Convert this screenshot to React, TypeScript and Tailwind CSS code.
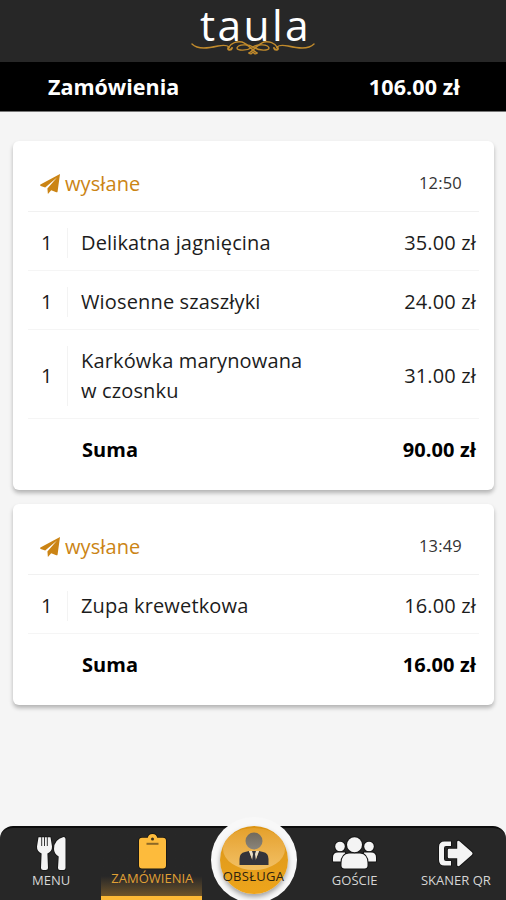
import type { ReactNode } from "react";

type OrderItem = { qty: number; name: string; price: string };
type Order = { time: string; items: OrderItem[]; total: string };

const ORDERS: Order[] = [
  {
    time: "12:50",
    items: [
      { qty: 1, name: "Delikatna jagnięcina", price: "35.00 zł" },
      { qty: 1, name: "Wiosenne szaszłyki", price: "24.00 zł" },
      { qty: 1, name: "Karkówka marynowana w czosnku", price: "31.00 zł" },
    ],
    total: "90.00 zł",
  },
  {
    time: "13:49",
    items: [{ qty: 1, name: "Zupa krewetkowa", price: "16.00 zł" }],
    total: "16.00 zł",
  },
];

function Flourish() {
  return (
    <svg
      width="124"
      height="16"
      viewBox="0 0 124 16"
      fill="none"
      stroke="#c08a2c"
      strokeWidth="1.4"
      strokeLinecap="round"
    >
      {/* left half, mirrored below */}
      <path d="M1 4C7 10 18 8 27 6C32 5 36 5 38 7C40 3 46 1 51 2C57 4 61 10 66 13" />
      <path d="M38 7C35 10 40 11 41 8" strokeWidth="2" />
      <path d="M62 7C58 4 47 4 46 8C46 11 56 11 62 7" />
      <path d="M123 4C117 10 106 8 97 6C92 5 88 5 86 7C84 3 78 1 73 2C67 4 63 10 58 13" />
      <path d="M86 7C89 10 84 11 83 8" strokeWidth="2" />
      <path d="M62 7C66 4 77 4 78 8C78 11 68 11 62 7" />
      <path d="M58 13C60 15 61 13 62 12C63 13 64 15 66 13" />
    </svg>
  );
}

function PlaneIcon() {
  return (
    <svg width="20" height="20" viewBox="0 0 20 20" fill="currentColor">
      <path d="M20 0L0.400 10.600Q-0.300 11.400 0.700 11.900L5.200 13.400L17 3.400L7.400 14.400L7.900 20L11.200 16.200L16.300 18.300Q17.400 18.600 17.600 17.500Z" />
    </svg>
  );
}

function CutleryIcon() {
  return (
    <svg width="29" height="33" viewBox="0 0 29 33" className="overflow-visible">
      <g fill="currentColor" stroke="#141414" strokeWidth="1.6" paintOrder="stroke">
        <path d="M1.500 0.300H13.500L15 9.500Q15.200 14.500 10.400 16.500L11 31Q11 33 8.800 33H6.200Q4 33 4 31L4.600 16.500Q-0.200 14.500 0 9.500Z" />
        <path d="M26.500 0Q28.500 0 28.500 2V31Q28.500 33 26.500 33H23Q21 33 21 31L21.700 19.500Q17 16.500 17 12Q17 2.500 26.500 0Z" />
      </g>
      <path d="M4.700 0V9M7.500 0V9M10.300 0V9" stroke="#343434" strokeWidth="1" />
    </svg>
  );
}

function ClipboardIcon() {
  return (
    <svg width="27" height="35" viewBox="0 0 27 35" className="overflow-visible">
      <g fill="currentColor" stroke="#17150f" strokeWidth="1.400" paintOrder="stroke">
        <path d="M3 3.800H8.800C9.200 1.500 10.700 0 13.500 0S17.800 1.500 18.200 3.800H24Q27 3.800 27 6.800V31.500Q27 34.500 24 34.500H3Q0 34.500 0 31.500V6.800Q0 3.800 3 3.800Z" />
      </g>
      <circle cx="13.500" cy="5" r="1.500" fill="#3c301b" />
      <path d="M7.500 9.800H19.500" stroke="#8c6826" strokeWidth="2" />
    </svg>
  );
}

function GuestsIcon() {
  return (
    <svg width="43" height="32" viewBox="0 0 43 32" className="overflow-visible">
      <g fill="currentColor" stroke="#141414" strokeWidth="2" paintOrder="stroke">
        <circle cx="7" cy="9.500" r="4.800" />
        <circle cx="36" cy="9.500" r="4.800" />
        <path d="M0 24V20.500Q0 15.600 5 15.600H12L13 24.500H1Q0 24.500 0 24Z" />
        <path d="M43 24V20.500Q43 15.600 38 15.600H31L30 24.500H42Q43 24.500 43 24Z" />
        <path d="M8.500 28.500V26Q8.500 17 16 16.500H27Q34.500 17 34.500 26V28.500Q34.500 31.500 31.500 31.500H11.500Q8.500 31.500 8.500 28.500Z" />
        <circle cx="21.500" cy="7.800" r="7.500" />
      </g>
    </svg>
  );
}

function ExitIcon() {
  return (
    <svg width="34" height="27" viewBox="0 0 34 27" className="overflow-visible">
      <path
        d="M12 1.500V6H7Q5 6 5 8V19Q5 21 7 21H12V25.500H5.500Q0 25.500 0 20V7Q0 1.500 5.500 1.500Z"
        fill="currentColor"
        stroke="#141414"
        strokeWidth="1.600"
        paintOrder="stroke"
      />
      <path
        d="M10 8.800H18.200V1.800Q18.800 0 20.500 1.200L33 12.200Q34.200 13.500 33 14.800L20.500 25.800Q18.800 27 18.200 25.200V18.200H10Q8.800 18.200 8.800 17V10Q8.800 8.800 10 8.800Z"
        fill="currentColor"
        stroke="#141414"
        strokeWidth="2"
        paintOrder="stroke"
      />
    </svg>
  );
}

function OrderCard({ order }: { order: Order }) {
  return (
    <section className="rounded-[6px] bg-white px-[15px] pb-[10px] shadow-[0_3px_4px_rgba(0,0,0,0.27)]">
      <div className="flex h-[71px] items-center justify-between border-b border-[#f1f1f1] pl-3 pr-[17px] pt-[15px]">
        <div className="flex items-center gap-[5px] text-[#cb8414]">
          <PlaneIcon />
          <span className="pt-px text-[20px] leading-[30px] tracking-[0.1px]">
            wysłane
          </span>
        </div>
        <span className="-mt-0.5 text-[16.5px] leading-[24px] tracking-[0.2px] text-[#333]">
          {order.time}
        </span>
      </div>
      {order.items.map((item) => (
        <div
          key={item.name}
          className="flex items-center border-b border-[#f5f5f5] pb-3 pt-4 pl-[13px] pr-[3px] text-[20px] leading-[30px] tracking-[0.15px] text-[#1c1c1c]"
        >
          <span className="w-[26px]">{item.qty}</span>
          <span className="w-[250px] border-l border-[#f3f3f3] pl-[13px]">
            {item.name}
          </span>
          <span className="ml-auto">{item.price}</span>
        </div>
      ))}
      <div className="flex h-[61px] items-center justify-between pl-[54px] pr-[3px] pt-px text-[20px] font-bold leading-[30px] tracking-[0.1px] text-black">
        <span>Suma</span>
        <span>{order.total}</span>
      </div>
    </section>
  );
}

function NavItem({
  icon,
  label,
  active,
}: {
  icon: ReactNode;
  label: string;
  active?: boolean;
}) {
  return (
    <button
      type="button"
      className={
        active
          ? "flex flex-1 flex-col items-center border-b-4 border-[#fdb935] bg-linear-to-t from-[#6f5427] to-[#272727] to-[20px] pt-[6px] text-[#e0a035]"
          : "flex flex-1 flex-col items-center pt-[7px] text-[#d6d6d6]"
      }
    >
      <span
        className={
          active
            ? "ml-px flex h-[35px] items-center text-[#fdbb3c]"
            : "ml-px flex h-[36px] items-center text-[#f4f4f4]"
        }
      >
        {icon}
      </span>
      <span className="ml-px whitespace-nowrap text-[13px] leading-[18px]">
        {label}
      </span>
    </button>
  );
}

function ServiceButton() {
  return (
    <div className="flex flex-1 justify-center">
      <button
        type="button"
        className="-mt-[11px] ml-px flex h-[86px] w-[86px] shrink-0 items-center justify-center rounded-full bg-[#f8f8f8]"
      >
        <span className="relative flex h-[68px] w-[68px] shrink-0 flex-col items-center rounded-full bg-linear-to-b from-[#dc9413] via-[#e39d1c] to-[#eea51b] shadow-[0_3px_5px_rgba(0,0,0,0.35)]">
          <span className="absolute left-[3px] top-[2px] h-[42px] w-[62px] rounded-[50%] bg-linear-to-b from-[#e5a12a] to-[#f2c063]" />
          <svg width="30" height="34" viewBox="0 0 30 34" className="relative mt-[6px]">
            <defs>
              <linearGradient id="head" x1="0" y1="0" x2="0" y2="1">
                <stop offset="0" stopColor="#70695c" />
                <stop offset="1" stopColor="#8a857b" />
              </linearGradient>
            </defs>
            <circle cx="15" cy="9" r="8.500" fill="url(#head)" />
            <path d="M0.500 33V27Q0.500 21 6 20L10 19L14 30L15 32L16 30L20 19L24 20Q29.500 21 29.500 27V33Z" fill="#34343a" />
            <path d="M10 19L15 32L20 19Z" fill="#e9dfc9" />
            <path d="M13 19H17L16 22L17.200 30L15 33L12.800 30L14 22Z" fill="#34343a" />
          </svg>
          <span className="relative whitespace-nowrap text-[13px] leading-[20px] tracking-[0.3px] text-[#2c220f]">
            OBSŁUGA
          </span>
        </span>
      </button>
    </div>
  );
}

export default function App() {
  return (
    <div className="flex h-[900px] w-[506px] flex-col overflow-hidden bg-[#f5f5f5] font-['Open_Sans',sans-serif]">
      <header className="flex h-[62px] flex-col items-center bg-[#272727]">
        <div className="h-[50px] pl-[5px] text-[42.5px] leading-[50px] tracking-[2.4px] text-white">
          taula
        </div>
        <div className="-mt-[10px]">
          <Flourish />
        </div>
      </header>

      <div className="flex h-[50px] items-center justify-between border-b border-[#777] bg-black pl-12 pr-[46px] pt-0.5 text-[21.5px] font-bold text-white">
        <span>Zamówienia</span>
        <span className="tracking-[0.1px]">106.00 zł</span>
      </div>

      <main className="flex flex-1 flex-col gap-[14px] pl-[13px] pr-3 pt-[29px]">
        {ORDERS.map((order) => (
          <OrderCard key={order.time} order={order} />
        ))}
      </main>

      <nav className="flex h-[74px] rounded-t-[13px] border-t-2 border-[#0d0d0d] bg-[#272727]">
        <NavItem icon={<CutleryIcon />} label="MENU" />
        <NavItem icon={<ClipboardIcon />} label="ZAMÓWIENIA" active />
        <ServiceButton />
        <NavItem icon={<GuestsIcon />} label="GOŚCIE" />
        <NavItem icon={<ExitIcon />} label="SKANER QR" />
      </nav>
    </div>
  );
}
